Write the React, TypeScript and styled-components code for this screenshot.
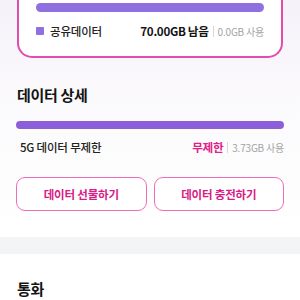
import styled, { createGlobalStyle } from "styled-components";

const GlobalStyle = createGlobalStyle`
  html, body {
    margin: 0;
    padding: 0;
    background: #fff;
  }
  body {
    font-family: "Noto Sans CJK KR", "Noto Sans", sans-serif;
    color: #1f1f1f;
  }
`;

const Page = styled.div`
  width: 300px;
  overflow: hidden;
`;

const DataSection = styled.section`
  padding: 0 16px 26px;
  background: linear-gradient(180deg, #f5f1f9 0%, #fbfafc 45%, #ffffff 100%);
`;

const UsageCard = styled.div`
  margin: 0 1px;
  padding: 3px 17px 15px;
  background: #fff;
  border: 2px solid #e24cae;
  border-top: none;
  border-radius: 0 0 15px 15px;
`;

const Bar = styled.div<{ color: string; h: number }>`
  height: ${(p) => p.h}px;
  border-radius: ${(p) => p.h / 2}px;
  background: ${(p) => p.color};
`;

const UsageRow = styled.div<{ indent?: number }>`
  display: flex;
  align-items: center;
  justify-content: space-between;
  height: 20px;
  padding-left: ${(p) => p.indent || 0}px;
`;

const Label = styled.div`
  display: flex;
  align-items: center;
  gap: 6px;
  font-size: 11.5px;
  font-weight: 500;
  color: #222;
  letter-spacing: -0.2px;
`;

const Swatch = styled.span`
  width: 8px;
  height: 8px;
  border-radius: 1px;
  background: #8f70e0;
`;

const Amount = styled.div`
  display: flex;
  align-items: center;
`;

const Remain = styled.span<{ pink?: boolean }>`
  font-size: 11.6px;
  font-weight: 700;
  letter-spacing: -0.3px;
  color: ${(p) => (p.pink ? "#e0208a" : "#141414")};
`;

const Divider = styled.span`
  width: 1px;
  height: 11px;
  margin: 0 4px;
  background: #d6d6d6;
`;

const Used = styled.span`
  font-size: 10px;
  color: #a3a3a3;
  letter-spacing: -0.2px;
`;

const Heading = styled.h2`
  margin: 0;
  font-size: 15px;
  font-weight: 700;
  color: #141414;
  letter-spacing: -0.3px;
  line-height: 24px;
`;

const DetailHeading = styled(Heading)`
  margin: 25px 0 14px 1px;
`;

const DetailRow = styled(UsageRow)`
  margin-top: 8px;
`;

const SharedRow = styled(UsageRow)`
  margin-top: 9px;
`;

const ButtonRow = styled.div`
  display: grid;
  grid-template-columns: 1fr 1fr;
  gap: 7px;
  margin-top: 20px;
`;

const ActionButton = styled.button`
  height: 34px;
  border: 1.5px solid #f06cb8;
  border-radius: 9px;
  background: #fff;
  color: #d81b85;
  font-family: inherit;
  font-size: 11.5px;
  font-weight: 700;
  letter-spacing: -0.2px;
`;

const Band = styled.div`
  height: 17px;
  background: #f3f4f6;
`;

const CallSection = styled.section`
  padding: 23px 17px 0;
`;

export default function App() {
  return (
    <Page>
      <GlobalStyle />
      <DataSection>
        <UsageCard>
          <Bar color="#8f70e0" h={9} />
          <SharedRow>
            <Label>
              <Swatch />
              공유데이터
            </Label>
            <Amount>
              <Remain>70.00GB 남음</Remain>
              <Divider />
              <Used>0.0GB 사용</Used>
            </Amount>
          </SharedRow>
        </UsageCard>

        <DetailHeading>데이터 상세</DetailHeading>
        <Bar color="#8c5fd8" h={8} />
        <DetailRow indent={4}>
          <Label>5G 데이터 무제한</Label>
          <Amount>
            <Remain pink>무제한</Remain>
            <Divider />
            <Used>3.73GB 사용</Used>
          </Amount>
        </DetailRow>

        <ButtonRow>
          <ActionButton>데이터 선물하기</ActionButton>
          <ActionButton>데이터 충전하기</ActionButton>
        </ButtonRow>
      </DataSection>
      <Band />
      <CallSection>
        <Heading>통화</Heading>
      </CallSection>
    </Page>
  );
}
